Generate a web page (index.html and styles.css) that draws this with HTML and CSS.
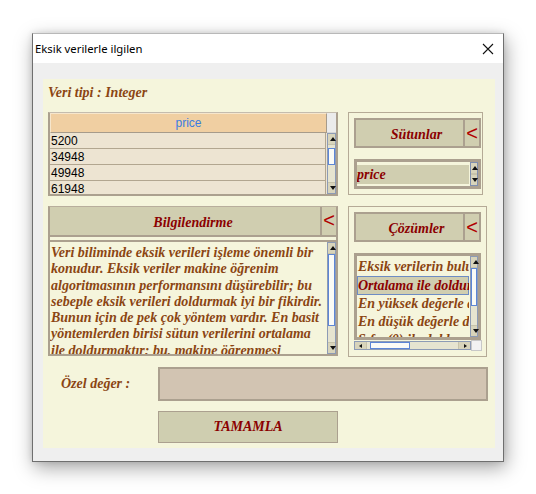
FILE: index.html
```html
<!DOCTYPE html>
<html lang="tr">
<head>
<meta charset="utf-8">
<title>Eksik verilerle ilgilen</title>
<link rel="stylesheet" href="styles.css">
</head>
<body>
<div class="window">
  <div class="titlebar">
    <span class="title">Eksik verilerle ilgilen</span>
    <svg class="close" width="12" height="12" viewBox="0 0 12 12"><path d="M1 1 L11 11 M11 1 L1 11" stroke="#111" stroke-width="1.1" fill="none"/></svg>
  </div>
  <div class="client">
    <div class="panel">
      <div class="type">Veri tipi : Integer</div>

      <div class="row row1">
        <div class="table-frame">
          <div class="thead">
            <div class="th">price</div>
            <div class="th-corner"></div>
          </div>
          <div class="tbody">
            <div class="rows">
              <div class="tr">5200</div>
              <div class="tr">34948</div>
              <div class="tr">49948</div>
              <div class="tr">61948</div>
            </div>
            <div class="vscroll tscroll">
              <div class="arr up"></div>
              <div class="track small"></div>
              <div class="thumb t1"></div>
              <div class="track"></div>
              <div class="arr down"></div>
            </div>
          </div>
        </div>

        <div class="side-frame sutun">
          <div class="tkbtn">
            <div class="tkbtn-main">Sütunlar</div>
            <div class="tkbtn-arrow">&lt;</div>
          </div>
          <div class="listbox small-list">
            <div class="items">
              <div class="item sel-plain">price</div>
            </div>
            <div class="vscroll mini">
              <div class="arr up"></div>
              <div class="arr down"></div>
            </div>
          </div>
        </div>
      </div>

      <div class="row row2">
        <div class="info-frame">
          <div class="info-head">
            <div class="info-title">Bilgilendirme</div>
            <div class="info-arrow">&lt;</div>
          </div>
          <div class="textbox">
            <div class="text">
              <div class="ln">Veri biliminde eksik verileri işleme önemli bir</div>
              <div class="ln">konudur. Eksik veriler makine öğrenim</div>
              <div class="ln">algoritmasının performansını düşürebilir; bu</div>
              <div class="ln">sebeple eksik verileri doldurmak iyi bir fikirdir.</div>
              <div class="ln">Bunun için de pek çok yöntem vardır. En basit</div>
              <div class="ln">yöntemlerden birisi sütun verilerini ortalama</div>
              <div class="ln">ile doldurmaktır; bu, makine öğrenmesi</div>
            </div>
            <div class="vscroll xscroll">
              <div class="arr up"></div>
              <div class="thumb t2"></div>
              <div class="track"></div>
              <div class="arr down"></div>
            </div>
          </div>
        </div>

        <div class="side-frame cozum">
          <div class="tkbtn">
            <div class="tkbtn-main">Çözümler</div>
            <div class="tkbtn-arrow">&lt;</div>
          </div>
          <div class="list-wrap">
            <div class="listbox big-list">
              <div class="items padded">
                <div class="item">Eksik verilerin bulunduğu satırları sil</div>
                <div class="item sel">Ortalama ile doldur</div>
                <div class="item">En yüksek değerle doldur</div>
                <div class="item">En düşük değerle doldur</div>
                <div class="item">Sıfır (0) ile doldur</div>
              </div>
              <div class="vscroll lscroll">
                <div class="arr up"></div>
                <div class="thumb t3"></div>
                <div class="track"></div>
                <div class="arr down"></div>
              </div>
            </div>
            <div class="hrow">
              <div class="hscroll">
                <div class="harr left"></div>
                <div class="htrack small"></div>
                <div class="hthumb"></div>
                <div class="htrack"></div>
                <div class="harr right"></div>
              </div>
              <div class="corner"></div>
            </div>
          </div>
        </div>
      </div>

      <div class="custom-row">
        <div class="custom-label">Özel değer :</div>
        <div class="custom-input"></div>
      </div>
      <div class="btn-row">
        <div class="complete">TAMAMLA</div>
      </div>
    </div>
  </div>
</div>
</body>
</html>
```
FILE: styles.css
```css
* { box-sizing: border-box; }
html, body { margin: 0; padding: 0; background: #ffffff; }
body { width: 536px; height: 494px; overflow: hidden; }

.window {
  margin: 33px 0 0 32px;
  width: 472px;
  height: 429px;
  border: 1px solid #6f6f6f;
  border-top-color: #b8b8b8;
  background: #efefef;
  box-shadow: 2px 6px 18px rgba(0,0,0,0.35), 0 0 6px rgba(0,0,0,0.12);
}
.titlebar {
  height: 29px;
  background: #ffffff;
  display: flex;
  align-items: center;
  justify-content: space-between;
  padding: 0 9px 0 2px;
}
.title {
  font-family: "Noto Sans", "Liberation Sans", sans-serif;
  font-size: 11.3px;
  color: #000;
}
.close { display: block; }

.client { padding: 16px 8px 12px 10px; }
.panel {
  background: #f5f5dc;
  height: 369px;
  padding-left: 5px;
}
.type {
  padding-top: 4px;
  height: 24px;
  line-height: 20px;
  margin-bottom: 9px;
  font-family: "Liberation Serif", serif;
  font-weight: bold;
  font-style: italic;
  font-size: 14px;
  color: #8b4513;
}

.row { display: flex; align-items: flex-start; }
.row1 { height: 84px; margin-bottom: 10px; }
.row2 { height: 151px; }

/* table */
.table-frame {
  width: 290px;
  height: 84px;
  border: 2px solid #aba08f;
  border-top: 1px solid #c4bcae;
  background: #ede4d2;
  overflow: hidden;
}
.thead { display: flex; height: 20px; }
.th {
  width: 277px;
  background: #f0cfa2;
  border: 1px solid #a69b8b;
  border-top-color: #f6e6cc;
  border-left-color: #f6e6cc;
  text-align: center;
  font-family: "Liberation Sans", sans-serif;
  font-size: 12px;
  line-height: 18px;
  color: #3b7de0;
}
.th-corner { flex: 1; background: #ebebeb; border-bottom: 1px solid #d6d6d6; }
.tbody { display: flex; height: 62px; }
.rows { width: 277px; }
.tr {
  height: 16px;
  border-bottom: 1px solid #b2a690;
  border-right: 1px solid #b2a690;
  font-family: "Liberation Sans", sans-serif;
  font-size: 12px;
  line-height: 16px;
  color: #000;
  padding-left: 1px;
}

/* scrollbars */
.vscroll {
  display: flex;
  flex-direction: column;
  background: #e6e4d0;
  border: 1px solid #8d9bb5;
}
.tscroll { width: 9px; margin-left: 1px; height: 61px; }
.arr { height: 11px; position: relative; background: #d8d4bb; border-bottom: 1px solid #c7c3ab; }
.arr.down { border-bottom: none; border-top: 1px solid #c7c3ab; }
.arr::after {
  content: "";
  position: absolute;
  left: 2px;
  width: 0; height: 0;
  border-left: 3px solid transparent;
  border-right: 3px solid transparent;
}
.arr.up::after { top: 3px; border-bottom: 4px solid #111; }
.arr.down::after { top: 3px; border-top: 4px solid #111; }
.track { flex: 1; }
.track.small { flex: 0 0 3px; }
.thumb {
  background: #fbfbf6;
  border: 1px solid #5d86d6;
}
.t1 { height: 17px; }
.t2 { height: 72px; }
.t3 { height: 38px; }

/* side frames */
.side-frame {
  margin-left: 10px;
  border: 1px solid #b5aa96;
  padding: 5px;
}
.sutun { width: 135px; height: 83px; }
.cozum { width: 139px; height: 151px; }

.tkbtn {
  display: flex;
  width: 127px;
  height: 30px;
  border: 2px solid #aba08f;
  background: #d0ceb0;
}
.tkbtn-main {
  flex: 1;
  border-right: 2px solid #aba08f;
  text-align: center;
  font-family: "Liberation Serif", serif;
  font-weight: bold;
  font-style: italic;
  font-size: 14px;
  line-height: 29px;
  color: #8b0000;
  padding-left: 14px;
}
.tkbtn-arrow, .info-arrow {
  width: 14px;
  text-align: center;
  font-family: "Liberation Sans", sans-serif;
  font-size: 20px;
  line-height: 26px;
  color: #b00000;
}

.listbox {
  display: flex;
  width: 127px;
  border: 3px solid #aba08f;
  background: #f5f5dc;
}
.small-list { margin-top: 11px; height: 30px; }
.items { flex: 1; overflow: hidden; }
.items.padded { padding-top: 2px; }
.item {
  white-space: nowrap;
  font-family: "Liberation Serif", serif;
  font-weight: bold;
  font-style: italic;
  font-size: 14px;
  line-height: 18px;
  height: 18px;
  color: #8b4513;
  padding-left: 1px;
}
.sel-plain {
  margin-top: 3px;
  background: #d0ceb0;
  color: #8b0000;
  height: 19px;
  line-height: 19px;
  padding-left: 0;
}
.sel {
  background: #d0ceb0;
  color: #8b0000;
  border: 1px solid #6d8cc4;
  height: 19px;
  line-height: 17px;
  padding-left: 0;
}
.mini { width: 8px; margin-left: 1px; border-color: #7f8fb0; }
.mini .arr { height: 11px; }
.mini .arr::after { left: 1px; }

/* info */
.info-frame {
  width: 290px;
  height: 150px;
  border: 2px solid #aba08f;
  border-top: 1px solid #b8ae9c;
  display: flex;
  flex-direction: column;
  background: #f5f5dc;
}
.info-head {
  display: flex;
  height: 30px;
  background: #d0ceb0;
  border-bottom: 2px solid #aba08f;
}
.info-title {
  flex: 1;
  border-right: 2px solid #aba08f;
  text-align: center;
  font-family: "Liberation Serif", serif;
  font-weight: bold;
  font-style: italic;
  font-size: 14px;
  line-height: 31px;
  color: #8b0000;
  padding-left: 16px;
}
.textbox {
  flex: 1;
  margin-top: 3px;
  border-top: 2px solid #aba08f;
  display: flex;
  overflow: hidden;
}
.text {
  width: 276px;
  overflow: hidden;
  padding: 3px 0 0 1px;
}
.ln {
  white-space: nowrap;
  font-family: "Liberation Serif", serif;
  font-weight: bold;
  font-style: italic;
  font-size: 14px;
  line-height: 16.3px;
  color: #8b4513;
}
.xscroll { width: 9px; margin-left: 1px; }

/* solutions list */
.list-wrap { margin-top: 11px; width: 128px; }
.big-list { height: 87px; }
.lscroll { width: 8px; margin-left: 1px; }
.hrow { display: flex; height: 11px; }
.hscroll {
  width: 117px;
  display: flex;
  background: #e6e4d0;
  border: 1px solid #8d9bb5;
  height: 9px;
  margin-top: 1px;
}
.harr { width: 12px; position: relative; background: #d8d4bb; }
.harr.left { border-right: 1px solid #c7c3ab; }
.harr.right { border-left: 1px solid #c7c3ab; }
.harr::after {
  content: "";
  position: absolute;
  top: 2px;
  width: 0; height: 0;
  border-top: 2px solid transparent;
  border-bottom: 2px solid transparent;
}
.harr.left::after { left: 4px; border-right: 3px solid #111; }
.harr.right::after { left: 5px; border-left: 3px solid #111; }
.htrack { flex: 1; }
.htrack.small { flex: 0 0 3px; }
.hthumb { width: 40px; background: #fbfbf6; border: 1px solid #5d86d6; }
.corner {
  width: 11px;
  height: 11px;
  background: #f2f2f2;
  border: 1px solid #c8c8c8;
}

/* custom value */
.custom-row { display: flex; align-items: center; margin-top: 10px; height: 34px; }
.custom-label {
  width: 110px;
  padding-left: 13px;
  font-family: "Liberation Serif", serif;
  font-weight: bold;
  font-style: italic;
  font-size: 14px;
  color: #8b4513;
}
.custom-input {
  width: 330px;
  height: 34px;
  background: #d2c4b2;
  border: 2px solid #aba08f;
}
.btn-row { margin-top: 10px; padding-left: 110px; }
.complete {
  width: 180px;
  height: 32px;
  background: #cfceb0;
  border: 1px solid #aba08f;
  text-align: center;
  font-family: "Liberation Serif", serif;
  font-weight: bold;
  font-style: italic;
  font-size: 14px;
  line-height: 30px;
  color: #8b0000;
}
```
